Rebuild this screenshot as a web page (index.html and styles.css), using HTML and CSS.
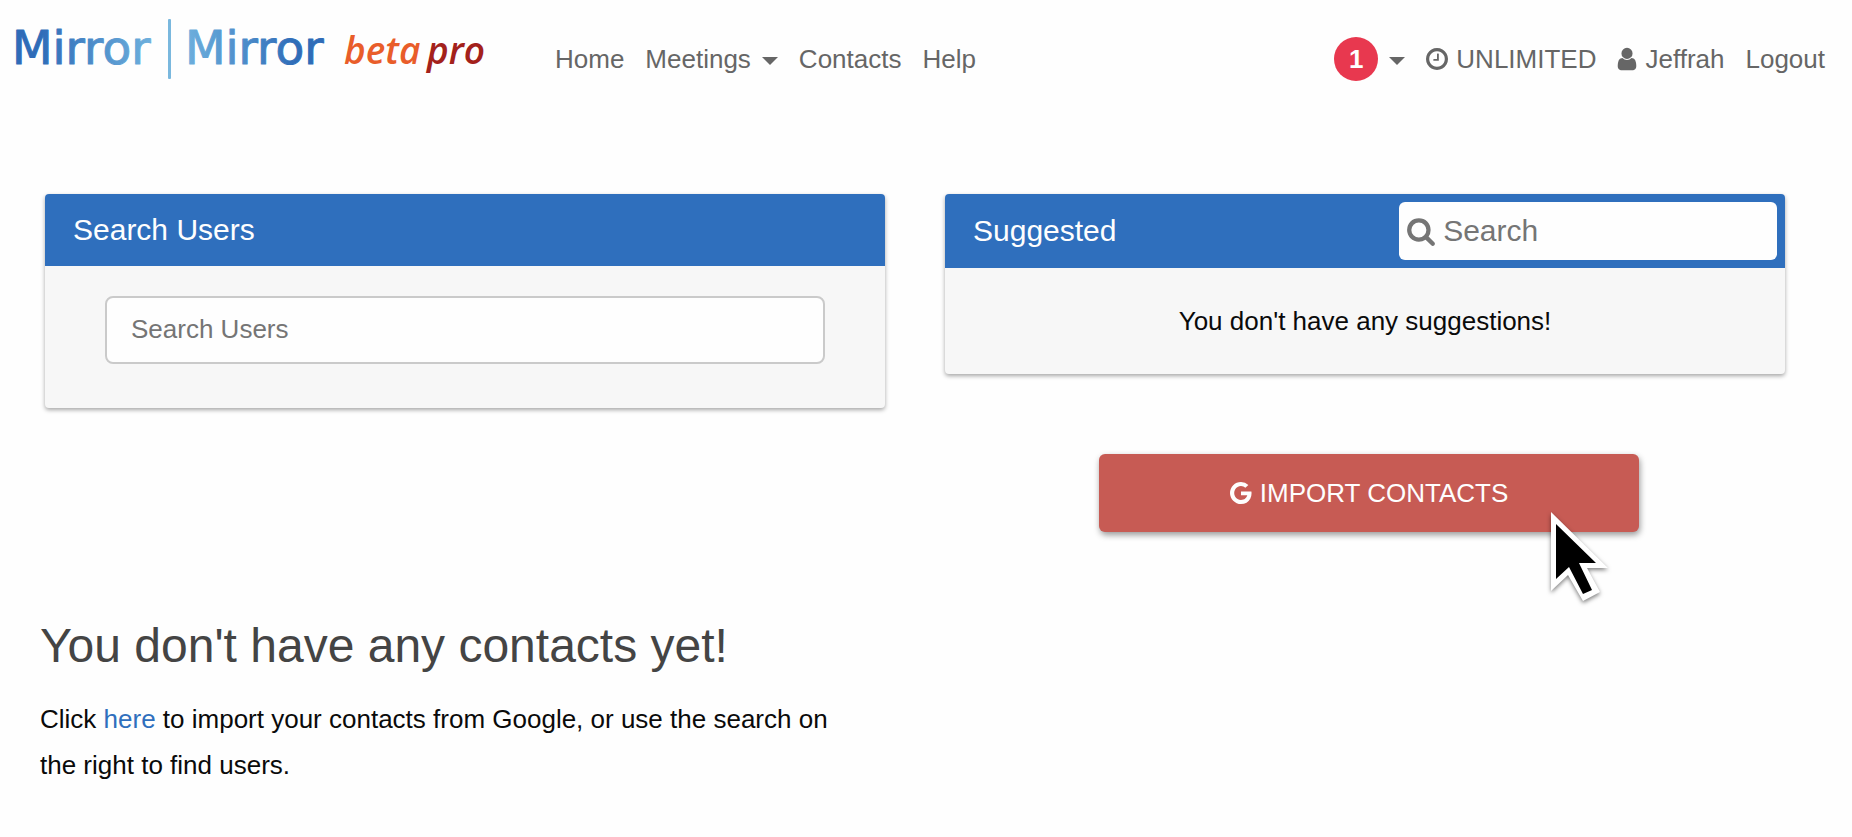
FILE: index.html
```
<!DOCTYPE html>
<html lang="en">
<head>
  <meta charset="UTF-8">
  <meta name="viewport" content="width=device-width, initial-scale=1.0">
  <title>Mirror Mirror - Contacts</title>
  <link rel="stylesheet" href="styles.css">
</head>
<body>
  <header class="top-bar">
    <a class="logo" href="#">
      <svg viewBox="0 0 476 60">
        <defs>
          <linearGradient id="fade-out">
            <stop offset="0.2" stop-color="#2f6cb8"/>
            <stop offset="1" stop-color="#6eb0dd"/>
          </linearGradient>
          <linearGradient id="fade-in">
            <stop offset="0" stop-color="#6eb0dd"/>
            <stop offset="0.8" stop-color="#2f6cb8"/>
          </linearGradient>
        </defs>
        <text class="logo-word" x="1" y="45" fill="url(#fade-out)" stroke="url(#fade-out)">Mirror</text>
        <rect x="157" y="0" width="3" height="60" rx="1" fill="#7ab8de"/>
        <text class="logo-word" x="174" y="45" fill="url(#fade-in)" stroke="url(#fade-in)">Mirror</text>
        <text class="logo-tag" x="333" y="45" fill="#e95d2a">beta</text>
        <text class="logo-tag" x="416" y="45" fill="#a3211b">pro</text>
      </svg>
    </a>
    <nav class="menu">
      <a href="#">Home</a>
      <a class="dropdown" href="#">Meetings <span class="caret"></span></a>
      <a href="#">Contacts</a>
      <a href="#">Help</a>
    </nav>
    <nav class="menu menu-right">
      <a class="dropdown" href="#"><span class="badge">1</span><span class="caret"></span></a>
      <a href="#">
        <svg class="icon" viewBox="0 0 1536 1792"><path d="M896 544v448q0 14-9 23t-23 9h-320q-14 0-23-9t-9-23v-64q0-14 9-23t23-9h224v-352q0-14 9-23t23-9h64q14 0 23 9t9 23zM1312 896q0-148-73-273t-198-198-273-73-273 73-198 198-73 273 73 273 198 198 273 73 273-73 198-198 73-273zM1536 896q0 209-103 385.500t-279.500 279.500-385.500 103-385.500-103-279.500-279.500-103-385.500 103-385.500 279.500-279.500 385.500-103 385.500 103 279.500 279.500 103 385.500z"/></svg>
        UNLIMITED
      </a>
      <a href="#">
        <svg class="icon icon-user" viewBox="0 0 1280 1792"><path d="M1280 1399q0 109-62.500 187t-150.500 78h-854q-88 0-150.500-78t-62.500-187q0-85 8.500-160.500t31.500-152 58.500-131 94-89 134.500-34.500q131 128 313 128t313-128q76 0 134.500 34.500t94 89 58.500 131 31.500 152 8.500 160.500zM1024 512q0 159-112.500 271.500t-271.500 112.500-271.500-112.500-112.500-271.500 112.500-271.500 271.500-112.500 271.500 112.500 112.500 271.500z"/></svg>
        Jeffrah
      </a>
      <a href="#">Logout</a>
    </nav>
  </header>

  <main class="content">
    <section class="column">
      <div class="card">
        <div class="card-header">
          <h2>Search Users</h2>
        </div>
        <div class="card-body">
          <input class="user-search" type="text" placeholder="Search Users" aria-label="Search Users">
        </div>
      </div>
    </section>

    <section class="column">
      <div class="card">
        <div class="card-header">
          <h2>Suggested</h2>
          <div class="filter">
            <svg class="icon icon-search" viewBox="0 0 1664 1792"><path d="M1152 832q0-185-131.500-316.500t-316.500-131.500-316.500 131.500-131.500 316.500 131.500 316.500 316.500 131.500 316.500-131.500 131.500-316.500zM1664 1664q0 52-38 90t-90 38q-54 0-90-38l-343-342q-179 124-399 124-143 0-273.500-55.500t-225-150-150-225-55.500-273.500 55.500-273.500 150-225 225-150 273.500-55.500 273.500 55.500 225 150 150 225 55.500 273.500q0 220-124 399l343 343q37 37 37 90z"/></svg>
            <input type="text" placeholder="Search" aria-label="Search suggestions">
          </div>
        </div>
        <p class="card-empty">You don't have any suggestions!</p>
      </div>
      <button class="import" type="button">
        <svg class="icon" viewBox="0 0 1536 1792"><path d="M768 786h725q12 67 12 128 0 217-91 387.500t-259.500 266.500-386.500 96q-157 0-299-60.500t-245-163.500-163.500-245-60.500-299 60.500-299 163.500-245 245-163.500 299-60.500q300 0 515 201l-209 201q-123-119-306-119-129 0-238.500 65t-173.500 176.500-64 243.500 64 243.500 173.500 176.500 238.500 65q87 0 160-24t120-60 82-82 51.500-87 22.500-78h-436v-264z"/></svg>
        IMPORT CONTACTS
        <svg class="pointer" viewBox="0 0 58 90">
          <path fill="#fff" d="M0 0L57 56H36L49 80L32 89L17 63L0 79Z"/>
          <path fill="#000" d="M5 12L45 51H28L41 78L32 82L18 55L5 67Z"/>
        </svg>
      </button>
    </section>

    <section class="no-contacts">
      <h1>You don't have any contacts yet!</h1>
      <p>Click <a href="#">here</a> to import your contacts from Google, or use the search on the right to find users.</p>
    </section>
  </main>
</body>
</html>
```
FILE: styles.css
```
* {
  margin: 0;
  padding: 0;
  box-sizing: border-box;
}

body {
  background: #fefefe;
  color: #0a0a0a;
  font-family: 'Liberation Sans', Arial, sans-serif;
  font-size: 26px;
}

a {
  color: #2f6fbd;
  text-decoration: none;
}

input,
button {
  font-family: inherit;
  font-size: inherit;
}

/* Top bar */
.top-bar {
  display: flex;
  align-items: flex-start;
  padding: 19px 27px 0 11px;
}

.logo {
  margin-right: 68px;
}

.logo svg {
  display: block;
  width: 476px;
  height: 60px;
}

.logo-word {
  font-family: 'DejaVu Sans', sans-serif;
  font-size: 47px;
  stroke-width: 1;
  stroke-linejoin: round;
}

.logo-tag {
  font-family: 'Open Sans', sans-serif;
  font-size: 37px;
  font-style: italic;
  font-weight: 600;
}

.menu {
  display: flex;
  gap: 21px;
  padding-top: 18px;
  line-height: 44px;
}

.menu a {
  display: flex;
  align-items: center;
  gap: 8px;
  color: #666;
  white-space: nowrap;
}

.menu .dropdown {
  gap: 11px;
}

.menu-right {
  margin-left: auto;
}

.caret {
  margin-top: 4px;
  border: 8px solid transparent;
  border-top-color: #666;
  border-bottom: 0;
}

.badge {
  width: 44px;
  height: 44px;
  border-radius: 50%;
  background: #e8384f;
  color: #fefefe;
  font-weight: 700;
  text-align: center;
}

.icon {
  width: 22px;
  height: 26px;
  fill: currentColor;
}

.icon-user {
  width: 20px;
}

/* Cards */
.content {
  display: grid;
  grid-template-columns: 1fr 1fr;
  padding: 113px 37px 0 15px;
}

.column {
  display: flex;
  flex-direction: column;
  align-items: center;
  padding: 0 30px;
}

.card {
  width: 100%;
  border-radius: 4px;
  background: #f7f7f7;
  box-shadow: 0 2px 4px rgba(0, 0, 0, 0.35);
  overflow: hidden;
}

.card-header {
  display: flex;
  align-items: center;
  justify-content: space-between;
  min-height: 72px;
  padding: 0 8px 0 28px;
  background: #2f6fbd;
  color: #fefefe;
}

.card-header h2 {
  font-size: 30px;
  font-weight: 400;
}

.card-body {
  padding: 30px 60px 44px;
}

.user-search {
  display: block;
  width: 100%;
  height: 68px;
  padding: 0 24px 2px;
  border: 2px solid #cacaca;
  border-radius: 8px;
  background: #fefefe;
}

input::placeholder {
  color: #757575;
}

.filter {
  display: flex;
  align-items: center;
  gap: 8px;
  width: 47%;
  height: 58px;
  margin: 8px 0;
  padding-left: 8px;
  border-radius: 6px;
  background: #fefefe;
  color: #757575;
  font-size: 30px;
}

.filter input {
  flex: 1;
  min-width: 0;
  border: 0;
  background: transparent;
}

.icon-search {
  width: 28px;
  height: 30px;
}

.card-empty {
  padding: 30px;
  line-height: 46px;
  text-align: center;
}

.import {
  position: relative;
  display: flex;
  align-items: center;
  justify-content: center;
  gap: 8px;
  width: 540px;
  max-width: 100%;
  height: 78px;
  margin: 80px 0 0 8px;
  border: 0;
  border-radius: 6px;
  background: #c75b54;
  color: #fefefe;
  box-shadow: 1px 3px 6px rgba(0, 0, 0, 0.4);
}

.pointer {
  position: absolute;
  top: 58px;
  right: 30px;
  width: 58px;
  height: 90px;
  filter: drop-shadow(0 2px 2px rgba(0, 0, 0, 0.5));
  overflow: visible;
}

/* Empty state */
.no-contacts {
  padding: 80px 50px 40px 25px;
}

.no-contacts h1 {
  margin-bottom: 17px;
  color: #444;
  font-size: 48px;
  font-weight: 400;
  line-height: 67px;
}

.no-contacts p {
  line-height: 46px;
}
```
